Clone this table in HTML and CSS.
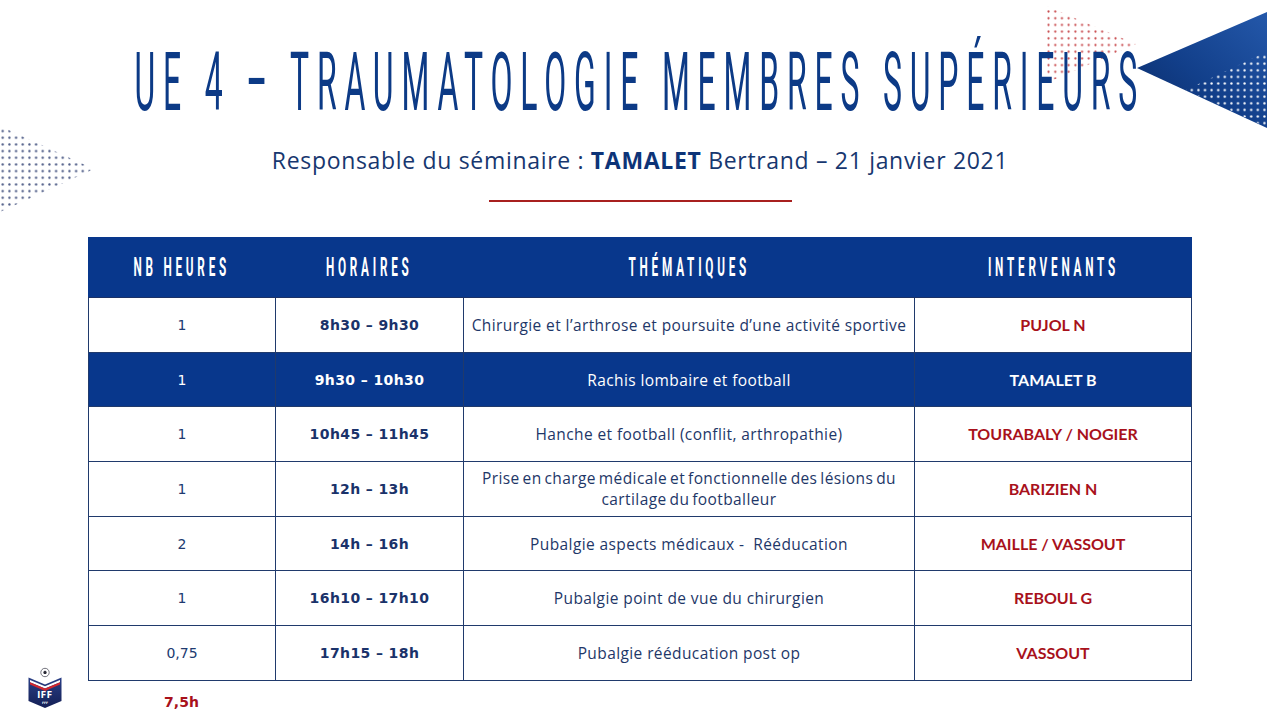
FILE: index.html
```html
<!DOCTYPE html>
<html lang="fr">
<head>
<meta charset="utf-8">
<title>UE 4 – Traumatologie membres supérieurs</title>
<link rel="stylesheet" href="styles.css">
</head>
<body>
<svg class="deco deco-tr" width="250" height="140" viewBox="1030 0 250 140" aria-hidden="true">
  <defs>
    <pattern id="dotsRed" x="0" y="1.5" width="6.7" height="6.7" patternUnits="userSpaceOnUse">
      <circle cx="3.35" cy="3.35" r="1.1" fill="#c7474a"/>
    </pattern>
    <pattern id="dotsWhite" x="0.5" y="1" width="6.6" height="6.6" patternUnits="userSpaceOnUse">
      <circle cx="3.3" cy="3.3" r="1.15" fill="#ffffff"/>
    </pattern>
    <linearGradient id="triGrad" x1="1" y1="0" x2="0" y2="1">
      <stop offset="0" stop-color="#2458aa"/>
      <stop offset="0.55" stop-color="#123f8a"/>
      <stop offset="1" stop-color="#0a2a66"/>
    </linearGradient>
  </defs>
  <polygon points="1044,5 1044,84 1136,44" fill="url(#dotsRed)"/>
  <polygon points="1137,68 1267,12 1267,128" fill="url(#triGrad)"/>
  <polygon points="1266,52 1186,90 1266,127" fill="url(#dotsWhite)"/>
</svg>

<svg class="deco deco-left" width="100" height="90" viewBox="0 125 100 90" aria-hidden="true">
  <defs>
    <pattern id="dotsGrey" x="-0.6" y="1" width="6.67" height="6.67" patternUnits="userSpaceOnUse">
      <circle cx="3.33" cy="3.33" r="1.15" fill="#4a5884"/>
    </pattern>
  </defs>
  <polygon points="0,126 0,212 94,169" fill="url(#dotsGrey)"/>
</svg>

<svg class="deco logo" width="46" height="52" viewBox="22 660 46 52" aria-hidden="true">
  <defs>
    <linearGradient id="shieldGrad" x1="0" y1="0" x2="0" y2="1">
      <stop offset="0" stop-color="#2a3f86"/>
      <stop offset="1" stop-color="#141f55"/>
    </linearGradient>
  </defs>
  <circle cx="45" cy="672.5" r="4.2" fill="#ffffff" stroke="#3a3a48" stroke-width="0.7"/>
  <polygon points="45,670.6 46.8,671.9 46.1,674 43.9,674 43.2,671.9" fill="#2a2a35"/>
  <path d="M28.5,677.5 L45,684.5 L61.5,677.5 L61.5,701 L45,708 L28.5,701 Z" fill="url(#shieldGrad)"/>
  <path d="M30,680 L45,686.3 L60,680 L60,682.2 L45,688.5 L30,682.2 Z" fill="#ffffff"/>
  <path d="M30,682.2 L45,688.5 L60,682.2 L60,684.6 L45,690.9 L30,684.6 Z" fill="#d1262f"/>
  <text x="45" y="698.4" class="logo-iff">IFF</text>
  <text x="45" y="703.6" class="logo-fff">FFF</text>
</svg>

<header class="head">
  <div class="title-wrap">
    <h1 class="title">UE 4 – TRAUMATOLOGIE MEMBRES SUPÉRIEURS</h1>
  </div>
  <p class="subtitle">Responsable du séminaire : <strong>TAMALET</strong> Bertrand – 21 janvier 2021</p>
  <div class="rule"></div>
</header>

<main class="content">
  <table class="program">
    <colgroup>
      <col class="c-hours">
      <col class="c-time">
      <col class="c-theme">
      <col class="c-speaker">
    </colgroup>
    <thead>
      <tr>
        <th><div class="hd"><span>NB HEURES</span></div></th>
        <th><div class="hd"><span>HORAIRES</span></div></th>
        <th><div class="hd"><span>THÉMATIQUES</span></div></th>
        <th><div class="hd"><span>INTERVENANTS</span></div></th>
      </tr>
    </thead>
    <tbody>
      <tr class="r55">
        <td class="num">1</td>
        <td class="time">8h30 – 9h30</td>
        <td class="theme">Chirurgie et l’arthrose et poursuite d’une activité sportive</td>
        <td class="who">PUJOL N</td>
      </tr>
      <tr class="r54 hl">
        <td class="num">1</td>
        <td class="time">9h30 – 10h30</td>
        <td class="theme">Rachis lombaire et football</td>
        <td class="who">TAMALET B</td>
      </tr>
      <tr class="r55">
        <td class="num">1</td>
        <td class="time">10h45 – 11h45</td>
        <td class="theme">Hanche et football (conflit, arthropathie)</td>
        <td class="who">TOURABALY / NOGIER</td>
      </tr>
      <tr class="r55">
        <td class="num">1</td>
        <td class="time">12h – 13h</td>
        <td class="theme tight">Prise en charge médicale et fonctionnelle des lésions du<br>cartilage du footballeur</td>
        <td class="who">BARIZIEN N</td>
      </tr>
      <tr class="r54">
        <td class="num">2</td>
        <td class="time">14h – 16h</td>
        <td class="theme">Pubalgie aspects médicaux -&nbsp; Rééducation</td>
        <td class="who">MAILLE / VASSOUT</td>
      </tr>
      <tr class="r55">
        <td class="num">1</td>
        <td class="time">16h10 – 17h10</td>
        <td class="theme">Pubalgie point de vue du chirurgien</td>
        <td class="who">REBOUL G</td>
      </tr>
      <tr class="r55">
        <td class="num">0,75</td>
        <td class="time">17h15 – 18h</td>
        <td class="theme">Pubalgie rééducation post op</td>
        <td class="who">VASSOUT</td>
      </tr>
    </tbody>
  </table>
  <div class="total">7,5h</div>
</main>
</body>
</html>
```

FILE: styles.css
```css
* { box-sizing: border-box; }

html, body {
  margin: 0;
  padding: 0;
}

body {
  width: 1280px;
  height: 720px;
  position: relative;
  overflow: hidden;
  background: #ffffff;
  font-family: "Open Sans", "Noto Sans", sans-serif;
  color: #1e3768;
}

.deco {
  position: absolute;
  z-index: -1;
  display: block;
}

.deco-tr { left: 1030px; top: 0; }
.deco-left { left: 0; top: 125px; }
.logo { left: 22px; top: 660px; z-index: 1; }

.logo-iff {
  font-family: "DejaVu Sans", sans-serif;
  font-weight: 700;
  font-size: 8px;
  fill: #ffffff;
  text-anchor: middle;
  letter-spacing: 0.6px;
}

.logo-fff {
  font-family: "DejaVu Sans", sans-serif;
  font-weight: 700;
  font-size: 3px;
  fill: #ffffff;
  text-anchor: middle;
}

/* ---------- header ---------- */
.head {
  display: flex;
  flex-direction: column;
  align-items: center;
}

.title-wrap {
  width: 100%;
  padding-top: 41px;
  height: 123px;
  display: flex;
  justify-content: center;
}

.title {
  margin: 0;
  flex: none;
  font-family: Roboto, "Liberation Sans", sans-serif;
  font-weight: 400;
  font-size: 82px;
  line-height: 82px;
  letter-spacing: 20px;
  white-space: nowrap;
  color: #0c3a86;
  transform: scaleX(0.39);
  transform-origin: center center;
}

.subtitle {
  margin: 21px 0 0;
  font-family: "Open Sans", "Noto Sans", sans-serif;
  font-size: 23px;
  line-height: 32px;
  letter-spacing: 0.68px;
  color: #17376f;
  white-space: nowrap;
}

.subtitle strong {
  font-weight: 700;
  color: #0d3478;
}

.rule {
  margin-top: 24px;
  width: 303px;
  height: 2px;
  background: #a8201f;
}

/* ---------- table ---------- */
.content {
  padding-left: 88px;
  margin-top: 35px;
}

.program {
  width: 1103px;
  border-collapse: collapse;
  table-layout: fixed;
}

.c-hours { width: 187px; }
.c-time { width: 188px; }
.c-theme { width: 451px; }
.c-speaker { width: 277px; }

.program th,
.program td {
  border: 1px solid #203a6c;
  padding: 0 4px;
  text-align: center;
  vertical-align: middle;
}

.program thead tr { height: 60px; }

.program th {
  background: #08378c;
  color: #ffffff;
  border-color: #08378c;
  border-bottom-color: #1b3166;
  padding: 0;
}

.hd {
  display: flex;
  justify-content: center;
  overflow: visible;
}

.hd span {
  flex: none;
  display: block;
  font-family: Roboto, "Liberation Sans", sans-serif;
  font-weight: 700;
  font-size: 25px;
  line-height: 30px;
  letter-spacing: 8px;
  white-space: nowrap;
  transform: scaleX(0.47);
  transform-origin: center center;
}

.r55 { height: 55px; }
.r54 { height: 54px; }

.program tbody tr { border-bottom: 1.5px solid #1c3466; }

.num {
  font-family: "DejaVu Sans", Verdana, sans-serif;
  font-size: 14px;
  line-height: 18px;
  color: #203a70;
}

.time {
  font-family: "DejaVu Sans", Verdana, sans-serif;
  font-weight: 700;
  font-size: 14px;
  line-height: 18px;
  letter-spacing: 0.4px;
  color: #1a326a;
}

.theme {
  font-family: "Open Sans", "Noto Sans", sans-serif;
  font-size: 15.5px;
  line-height: 22px;
  letter-spacing: 0.4px;
  color: #1e3768;
}

.theme.tight {
  word-spacing: -1.5px;
  line-height: 21.5px;
}

.who {
  font-family: Lato, "Noto Sans", sans-serif;
  font-weight: 700;
  font-size: 16px;
  line-height: 20px;
  color: #a8111b;
}

.program tr.hl td {
  background: #08378c;
  color: #ffffff;
  border-top-color: #1b3166;
}

.total {
  width: 187px;
  text-align: center;
  margin-top: 12px;
  font-family: "DejaVu Sans", Verdana, sans-serif;
  font-weight: 700;
  font-size: 14px;
  line-height: 18px;
  color: #a8111b;
}
```
